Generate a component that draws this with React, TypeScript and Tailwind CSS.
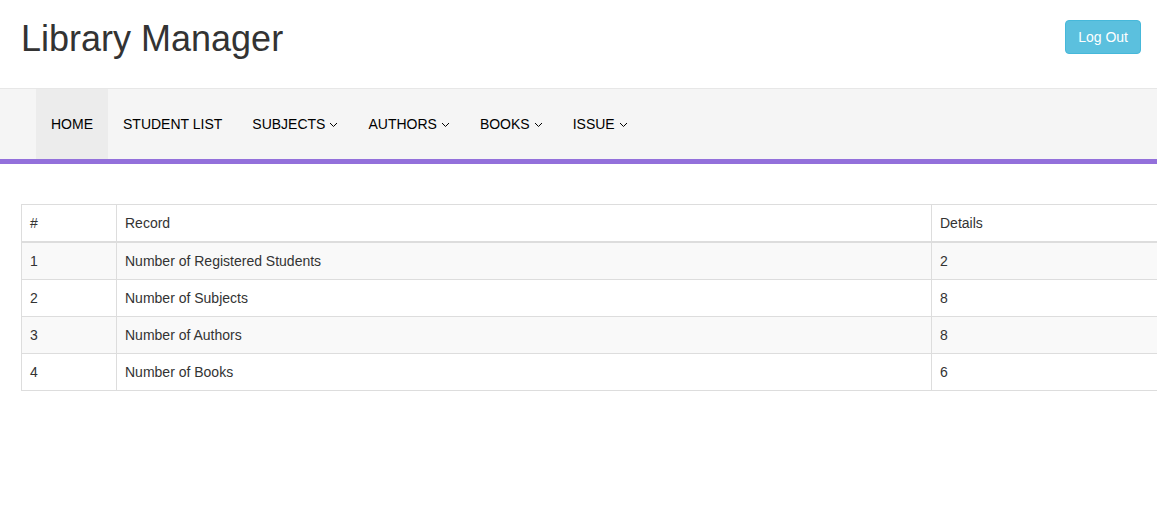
const navItems = [
  { label: 'HOME', active: true, menu: false },
  { label: 'STUDENT LIST', active: false, menu: false },
  { label: 'SUBJECTS', active: false, menu: true },
  { label: 'AUTHORS', active: false, menu: true },
  { label: 'BOOKS', active: false, menu: true },
  { label: 'ISSUE', active: false, menu: true }
]

const rows = [
  { id: 1, record: 'Number of Registered Students', details: 2 },
  { id: 2, record: 'Number of Subjects', details: 8 },
  { id: 3, record: 'Number of Authors', details: 8 },
  { id: 4, record: 'Number of Books', details: 6 }
]

function Caret() {
  return (
    <svg width="9" height="6" viewBox="0 0 9 6" className="mt-px" fill="none">
      <path d="M1 1l3.5 3.5L8 1" stroke="currentColor" strokeWidth="1" />
    </svg>
  )
}

export default function App() {
  return (
    <div className="min-h-screen bg-white text-[#333] font-['Liberation_Sans',Arial,sans-serif] text-sm">
      <header className="h-[88px] flex items-start justify-between pl-[21px] pr-4">
        <h1 className="mt-[19px] text-[36px] leading-[1.1] font-normal">Library Manager</h1>
        <button className="mt-5 px-3 py-1.5 leading-5 text-sm text-white bg-[#5bc0de] border border-[#46b8da] rounded">
          Log Out
        </button>
      </header>

      <nav className="border-t border-[#e7e7e7] bg-[#f5f5f5] border-b-[5px] border-b-[#9370db] pl-[36px] flex">
        {navItems.map(item => (
          <a
            key={item.label}
            className={`flex items-center gap-1 px-[15px] py-[25px] leading-5 text-black ${item.active ? 'bg-[#ececec]' : ''}`}
          >
            {item.label}
            {item.menu && <Caret />}
          </a>
        ))}
      </nav>

      <div className="mt-10 pl-[21px] overflow-hidden">
        <table className="w-[1200px] border-collapse border border-[#ddd] table-fixed">
          <colgroup>
            <col className="w-[95px]" />
            <col className="w-[815px]" />
            <col />
          </colgroup>
          <thead>
            <tr>
              <th className="text-left font-normal p-2 leading-5 border border-[#ddd] border-b-2">#</th>
              <th className="text-left font-normal p-2 leading-5 border border-[#ddd] border-b-2">Record</th>
              <th className="text-left font-normal p-2 leading-5 border border-[#ddd] border-b-2">Details</th>
            </tr>
          </thead>
          <tbody>
            {rows.map((r, i) => (
              <tr key={r.id} className={i % 2 === 0 ? 'bg-[#f9f9f9]' : 'bg-white'}>
                <td className="p-2 leading-5 border border-[#ddd]">{r.id}</td>
                <td className="p-2 leading-5 border border-[#ddd]">{r.record}</td>
                <td className="p-2 leading-5 border border-[#ddd]">{r.details}</td>
              </tr>
            ))}
          </tbody>
        </table>
      </div>
    </div>
  )
}
